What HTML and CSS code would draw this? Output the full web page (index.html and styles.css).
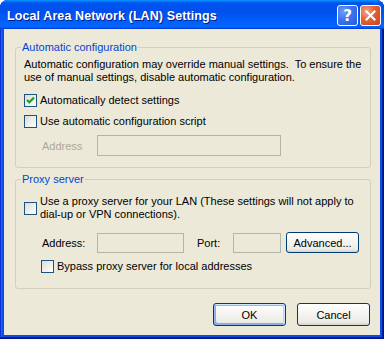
FILE: index.html
```html
<!DOCTYPE html>
<html lang="en">

<head>
    <meta charset="UTF-8">
    <title>Local Area Network (LAN) Settings</title>
    <link rel="stylesheet" href="styles.css">
</head>

<body>
    <div class="window">
        <div class="titlebar">
            <span class="title">Local Area Network (LAN) Settings</span>
            <div class="caption-buttons">
                <span class="cap-btn help">?</span>
                <span class="cap-btn close">
                    <svg width="11" height="11" viewBox="0 0 11 11">
                        <path d="M1.5 1.5 L9.5 9.5 M9.5 1.5 L1.5 9.5" stroke="#fff" stroke-width="2" stroke-linecap="square" />
                    </svg>
                </span>
            </div>
        </div>

        <div class="client">
            <fieldset class="group group-auto">
                <legend>Automatic configuration</legend>
                <p class="desc">Automatic configuration may override manual settings.&nbsp; To ensure the<br>use of manual settings, disable automatic configuration.</p>
                <label class="check first">
                    <span class="box">
                        <svg width="11" height="11" viewBox="0 0 11 11">
                            <path d="M2 5 L4.3 7.3 L9 2.6" fill="none" stroke="#21a121" stroke-width="2.2" />
                        </svg>
                    </span>
                    Automatically detect settings
                </label>
                <label class="check second">
                    <span class="box"></span>
                    Use automatic configuration script
                </label>
                <div class="field-row">
                    <span class="field-label disabled">Address</span>
                    <span class="textbox script-address"></span>
                </div>
            </fieldset>

            <fieldset class="group group-proxy">
                <legend>Proxy server</legend>
                <label class="check proxy">
                    <span class="box"></span>
                    <span>Use a proxy server for your LAN (These settings will not apply to<br>dial-up or VPN connections).</span>
                </label>
                <div class="field-row proxy-row">
                    <span class="field-label">Address:</span>
                    <span class="textbox proxy-address"></span>
                    <span class="field-label port-label">Port:</span>
                    <span class="textbox proxy-port"></span>
                    <button class="btn advanced">Advanced...</button>
                </div>
                <label class="check bypass">
                    <span class="box"></span>
                    Bypass proxy server for local addresses
                </label>
            </fieldset>

            <div class="dialog-buttons">
                <button class="btn default">OK</button>
                <button class="btn">Cancel</button>
            </div>
        </div>
    </div>
</body>

</html>
```

FILE: styles.css
```css
:root {
    --face: #ece9d8;
    --group-line: #d0d0bf;
    --legend: #0046d5;
}

body {
    margin: 0;
    background: #fff;
    font-family: "Liberation Sans", Arial, sans-serif;
    font-size: 11px;
    color: #000;
}

.window {
    width: 384px;
    height: 339px;
    display: flex;
    flex-direction: column;
    background: #0a4fe0;
    border-radius: 8px 8px 0 0;
    overflow: hidden;
    box-shadow: inset -1px -1px #00138c, inset 1px 1px #0831d9, inset -2px -2px #001ea0, inset 2px 2px #166aee;
}

.titlebar {
    height: 29px;
    flex-shrink: 0;
    display: flex;
    align-items: center;
    justify-content: space-between;
    padding: 0 3px 0 7px;
    box-sizing: border-box;
    background: linear-gradient(180deg, #0997ff, #0053ee 10%, #0050ee 40%, #0066ff 88%, #0066ff 93%, #005bff 95%, #003dd7 96%, #003dd7);
}

.title {
    color: #fff;
    font-weight: bold;
    font-size: 12.5px;
    padding-top: 2px;
    text-shadow: 1px 1px #0a1883;
    letter-spacing: 0.1px;
}

.caption-buttons {
    display: flex;
    gap: 2px;
    padding-top: 2px;
}

.cap-btn {
    width: 21px;
    height: 21px;
    box-sizing: border-box;
    border: 1px solid #fff;
    border-radius: 3px;
    display: flex;
    align-items: center;
    justify-content: center;
}

.help {
    color: #fff;
    font-family: "DejaVu Sans", sans-serif;
    font-weight: bold;
    font-size: 15px;
    background: radial-gradient(circle at 30% 30%, #6f9cf7 0%, #3c74ee 45%, #2558e0 100%);
}

.close {
    background: radial-gradient(circle at 30% 30%, #f4a58c 0%, #e35f35 45%, #c9421a 100%);
}

.client {
    flex: 1;
    margin: 0 4px 4px;
    background: var(--face);
    display: flex;
    flex-direction: column;
}

.group {
    margin: 0 9px 0 11px;
    padding: 4px 0 11px 8px;
    border: 1px solid var(--group-line);
    border-radius: 3px;
    min-width: 0;
}

.group-auto {
    margin-top: 12px;
}

.group-proxy {
    margin-top: 5px;
    padding-top: 9px;
    padding-bottom: 15px;
}

legend {
    color: var(--legend);
    padding: 0 1px;
    margin-left: -3px;
    line-height: 13px;
}

.desc {
    margin: 0;
    line-height: 13px;
}

.check {
    display: flex;
    align-items: center;
    gap: 3px;
    line-height: 13px;
}

.check.first {
    margin-top: 10px;
}

.check.second {
    margin-top: 8px;
}

.check.bypass {
    margin-top: 7px;
    padding-left: 17px;
}

.box {
    width: 13px;
    height: 13px;
    box-sizing: border-box;
    flex-shrink: 0;
    border: 1px solid #1d5281;
    background: linear-gradient(135deg, #dcdcd7, #fff);
    display: flex;
}

.field-row {
    display: flex;
    align-items: center;
    margin-top: 7px;
    padding-left: 18px;
    height: 21px;
}

.proxy-row {
    margin-top: 11px;
}

.field-label {
    width: 55px;
}

.field-label.disabled {
    color: #aca899;
}

.port-label {
    width: 36px;
    margin-left: 13px;
}

.textbox {
    height: 21px;
    box-sizing: border-box;
    border: 1px solid #b5b4ab;
    background: var(--face);
}

.script-address {
    width: 184px;
}

.proxy-address {
    width: 87px;
    height: 20px;
}

.proxy-port {
    width: 48px;
    height: 20px;
}

.btn {
    font-family: "Liberation Sans", Arial, sans-serif;
    font-size: 11px;
    color: #000;
    height: 23px;
    width: 73px;
    padding: 0;
    box-sizing: border-box;
    border: 1px solid #003c74;
    border-radius: 3px;
    background: linear-gradient(180deg, #fff, #ecebe6 86%, #d6d0c5);
}

.btn.advanced {
    height: 21px;
    margin-left: 5px;
}

.btn.default {
    box-shadow: inset -1px 1px #cee7ff, inset 1px 2px #98b8ea, inset -2px 2px #bcd4f6, inset 1px -1px #89ade4, inset 2px -2px #89ade4;
}

.dialog-buttons {
    display: flex;
    justify-content: flex-end;
    gap: 11px;
    margin-top: 14px;
    padding-right: 10px;
}
```
